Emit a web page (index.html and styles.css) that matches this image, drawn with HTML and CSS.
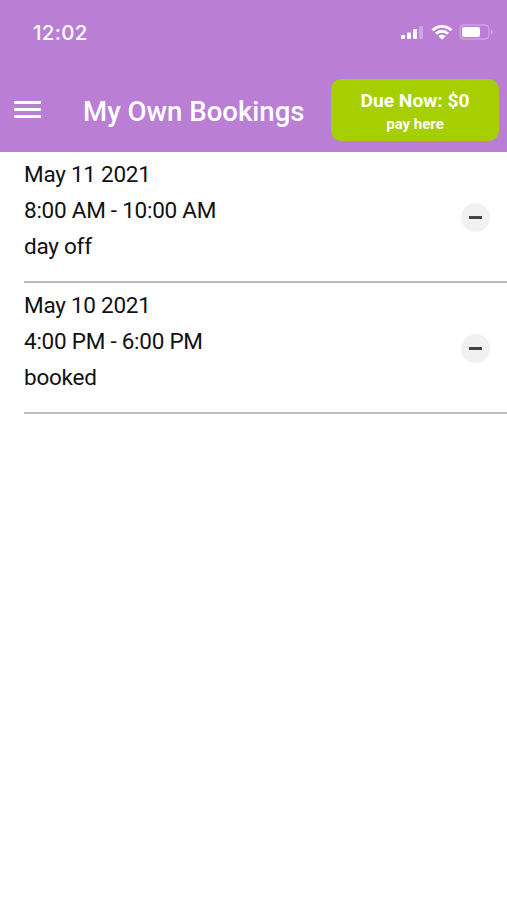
FILE: index.html
```html
<!DOCTYPE html>
<html lang="en">
<head>
    <meta charset="UTF-8">
    <meta name="viewport" content="width=device-width, initial-scale=1.0">
    <title>My Own Bookings</title>
    <link rel="stylesheet" href="styles.css">
</head>
<body>
    <header class="header">
        <div class="status-bar">
            <span class="time">12:02</span>
            <svg class="status-icons" width="94" height="18" viewBox="0 0 94 18">
                <g fill="#fff">
                    <!-- signal -->
                    <rect x="1" y="12" width="4" height="4" rx="1"/>
                    <rect x="7" y="9.500" width="4" height="6.500" rx="1"/>
                    <rect x="13" y="6" width="4" height="10" rx="1"/>
                    <rect x="19" y="3" width="4" height="13" rx="1" opacity="0.3"/>
                    <!-- wifi -->
                    <path d="M31.500 6.200a15 15 0 0 1 21 0l-2 2.100a12 12 0 0 0-17 0z"/>
                    <path d="M35 9.700a10 10 0 0 1 14 0l-2 2.100a7 7 0 0 0-10 0z"/>
                    <path d="M38.400 13.200a5.200 5.200 0 0 1 7.200 0L42 16.800z"/>
                    <!-- battery -->
                    <rect x="62" y="4" width="18" height="10" rx="2"/>
                    <path d="M91 6.500v5c2-.8 2-4.200 0-5z" opacity="0.4"/>
                </g>
                <rect x="60" y="2" width="29" height="14" rx="4" fill="none" stroke="#fff" opacity="0.4"/>
            </svg>
        </div>
        <div class="toolbar">
            <button class="menu-button" aria-label="Menu">
                <span class="menu-line"></span>
                <span class="menu-line"></span>
                <span class="menu-line"></span>
            </button>
            <h1 class="title">My Own Bookings</h1>
            <button class="pay-button">
                <span class="pay-amount">Due Now: $0</span>
                <span class="pay-text">pay here</span>
            </button>
        </div>
    </header>

    <main class="bookings">
        <div class="booking">
            <div class="booking-info">
                <p class="date">May 11 2021</p>
                <p class="hours">8:00 AM - 10:00 AM</p>
                <p class="state">day off</p>
            </div>
            <button class="remove-button" aria-label="Remove"><span class="minus"></span></button>
        </div>
        <div class="booking">
            <div class="booking-info">
                <p class="date">May 10 2021</p>
                <p class="hours">4:00 PM - 6:00 PM</p>
                <p class="state">booked</p>
            </div>
            <button class="remove-button" aria-label="Remove"><span class="minus"></span></button>
        </div>
    </main>
</body>
</html>
```
FILE: styles.css
```css
* {
    box-sizing: border-box;
}

body {
    margin: 0;
    background-color: #fff;
    color: #111;
    font-family: Roboto, Arial, sans-serif;
}

button {
    border: none;
    padding: 0;
    font-family: inherit;
    cursor: pointer;
}

.header {
    height: 152px;
    background-color: #ba7fd5;
    color: #fff;
}

.status-bar {
    display: flex;
    justify-content: space-between;
    align-items: center;
    height: 68px;
    padding: 0 13px 4px 33px;
}

.time {
    font-family: Inter, sans-serif;
    font-size: 20.5px;
    font-weight: 500;
    letter-spacing: 0.3px;
}

.toolbar {
    display: flex;
    align-items: center;
    height: 84px;
    padding: 0 8px 0 14px;
}

.menu-button {
    display: flex;
    flex-direction: column;
    gap: 4px;
    width: 27px;
    margin-bottom: 2px;
    background: none;
}

.menu-line {
    height: 3px;
    background-color: #fff;
}

.title {
    margin: 3px 0 0 42px;
    font-size: 27.6px;
    font-weight: 500;
    white-space: nowrap;
}

.pay-button {
    display: flex;
    flex-direction: column;
    align-items: center;
    justify-content: center;
    width: 168px;
    height: 62px;
    margin-left: auto;
    padding-top: 4px;
    border-radius: 10px;
    background-color: #a5cf00;
    color: #fff;
    font-weight: 700;
}

.pay-amount {
    font-size: 19.2px;
    line-height: 24px;
}

.pay-text {
    font-size: 15px;
    line-height: 22px;
}

.booking {
    display: flex;
    justify-content: space-between;
    align-items: center;
    height: 131px;
    margin-left: 24px;
    padding-right: 17px;
    border-bottom: 2px solid #bcbcbc;
}

.booking-info p {
    margin: 0;
    font-size: 22.5px;
    line-height: 36px;
    letter-spacing: -0.25px;
}

.booking-info {
    padding-bottom: 14px;
}

.remove-button {
    display: flex;
    align-items: center;
    justify-content: center;
    width: 29px;
    height: 29px;
    margin-top: 2px;
    border-radius: 50%;
    background-color: #f1f1f1;
}

.minus {
    width: 13px;
    height: 3px;
    background-color: #444;
}
```
